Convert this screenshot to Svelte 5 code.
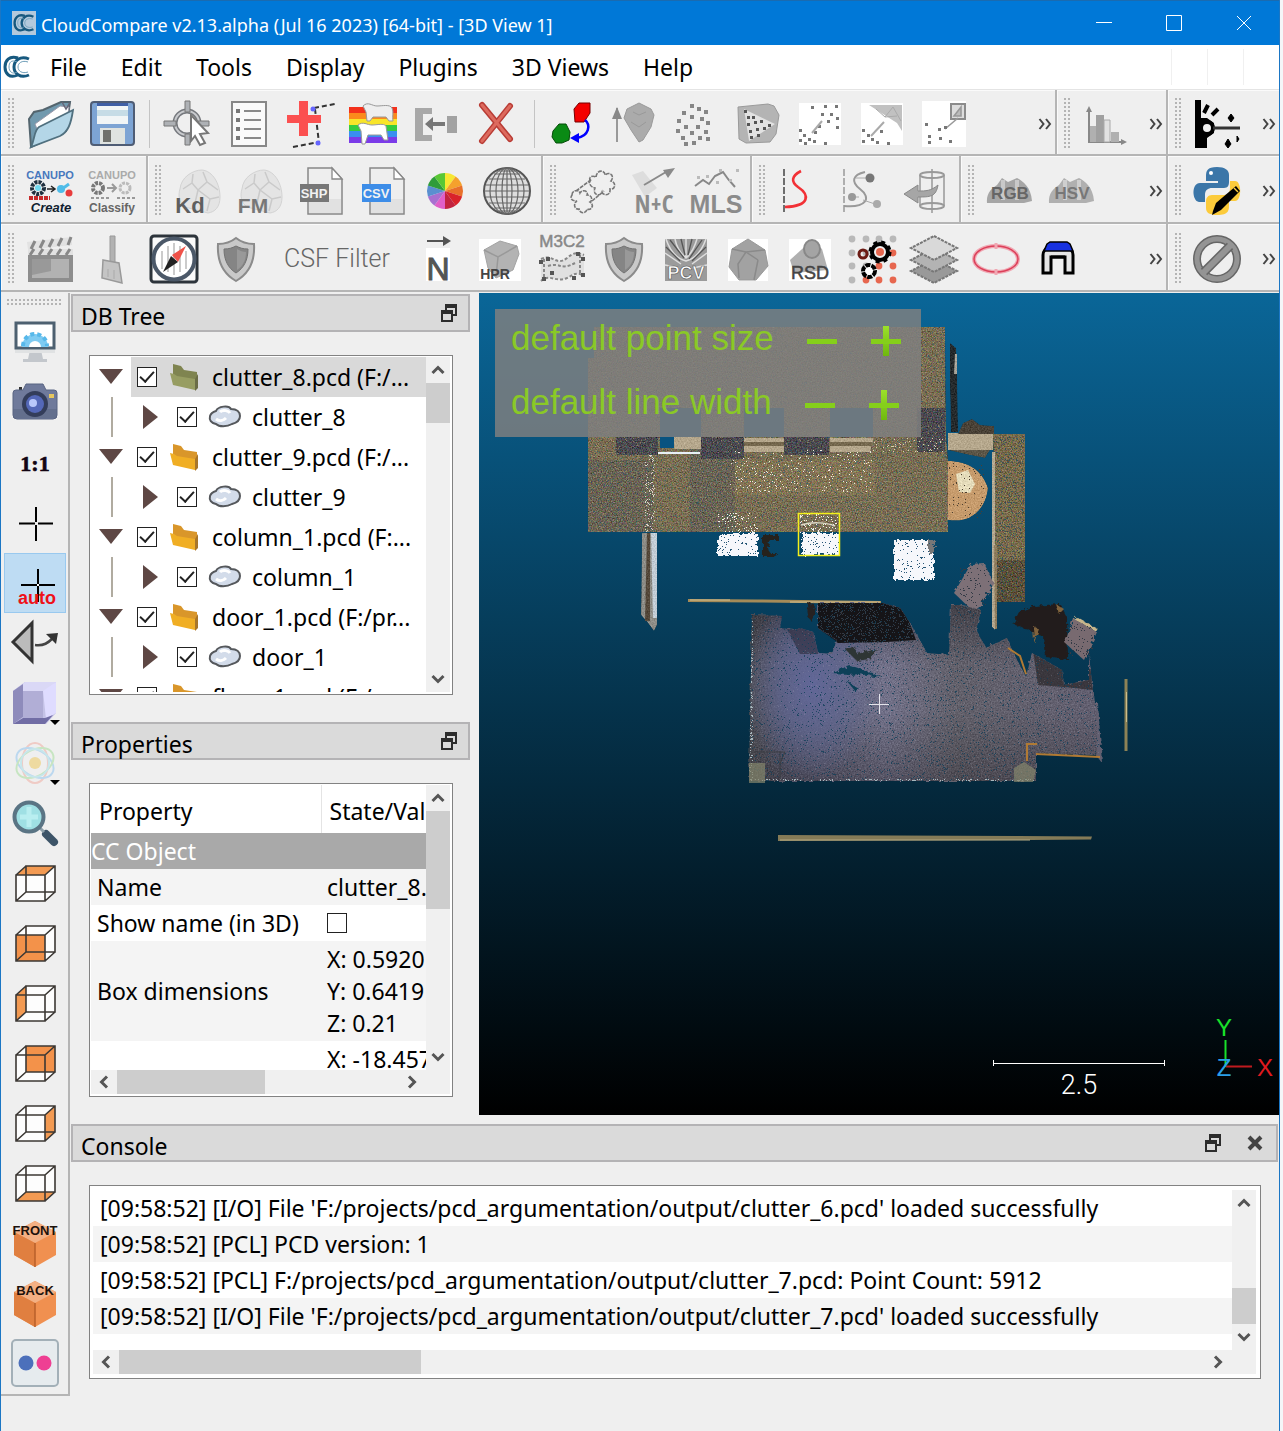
<script>
  const box = (faces) =>
    `<path d="M15 7h29v26l-10 9H5V16z" fill="#fdfdfd"/>${faces}<path d="M5 16h29v26H5zM15 7h29v26H15zM5 16L15 7M34 16l10-9M5 42l10-9M34 42l10-9" fill="none" stroke="#3c3834" stroke-width="1.6"/>`;
  const isoCube = (label) =>
    `<path d="M24 2l21 11v23L24 48 3 36V13z" fill="#f09050"/><path d="M24 2l21 11-21 11L3 13z" fill="#f3b084"/><path d="M3 13l21 11v24L3 36z" fill="#e07f40"/><path d="M24 24v24" stroke="#b95f2a" stroke-width="1.5"/><text x="24" y="16" font-size="13" font-weight="700" text-anchor="middle" fill="#1d120c">${label}</text>`;
  const shield =
    `<path d="M24 3c5 4 11 6 18 6 1 16-4 29-18 37C10 38 5 25 6 9c7 0 13-2 18-6z" fill="#c9c9c9" stroke="#8b8b8b" stroke-width="2"/><path d="M24 11c4 2 7 3 12 3 0 11-4 19-12 24-8-5-12-13-12-24 5 0 8-1 12-3z" fill="#858585" stroke="#737373"/><path d="M25 14c3 2 6 3 9 3 0 8-3 14-9 18z" fill="#999"/>`;
  const page = (color, label) =>
    `<path d="M11 1h24l10 11v35H11z" fill="#eee" stroke="#888" stroke-width="1.5"/><path d="M35 1v11h10z" fill="#fff" stroke="#888" stroke-width="1.3"/><path d="M12 32h32v14H12z" fill="#dcdcdc" opacity=".7"/><rect x="3" y="17" width="29" height="18" fill="${color}"/><text x="17" y="31" font-size="13" font-weight="700" text-anchor="middle" fill="#f2f2f2">${label}</text>`;
  const stone =
    `<path d="M7 22C8 10 20 3 29 3c11 1 18 14 18 27 0 10-5 15-12 16L12 40C6 36 5 28 7 22z" fill="#e4e4e4" stroke="#d3d3d3"/><path d="M10 22l9-6 6 7 9-8 11 8M19 16l1-9M34 15l-4-10M25 23l-3 13M25 23l12 9 9-2M37 32l-3 12" fill="none" stroke="#cacaca" stroke-width="1.5"/>`;
  const dotsAt = (pts, color, s = 3) =>
    pts.map(([x, y]) => `<rect x="${x}" y="${y}" width="${s}" height="${s}" fill="${color}"/>`).join('');

  const icons = {
    open: `<path d="M3 19l5-7 9-2 18-8 9 0-1 7-3 22L5 47z" fill="#7199ae" stroke="#54656e" stroke-width="2"/><path d="M9 24L34 6l9 1-2 14-28 13z" fill="#fff" stroke="#99a"/><path d="M5 47c4-8 3-17 8-20l34-17c-2 14-5 22-13 26z" fill="#b4d6e7" stroke="#50707f" stroke-width="1.8"/><path d="M36 2l4 7 4-6" fill="none" stroke="#667" stroke-width="1.5"/>`,
    save: `<rect x="3" y="2" width="43" height="43" rx="3" fill="#7da4d4" stroke="#4f5d75" stroke-width="2"/><rect x="9" y="3" width="31" height="21" fill="#f1f5f6"/><path d="M9 10h31v6H9z" fill="#c6dce6"/><path d="M9 3h31v3H9z" fill="#3f5fa5"/><rect x="12" y="28" width="25" height="16" fill="#dfe3e0"/><rect x="15" y="30" width="8" height="12" fill="#70716c"/>`,
    pick: `<g fill="none" stroke="#75787d"><circle cx="24" cy="23" r="12" stroke-width="5"/><circle cx="24" cy="23" r="12" stroke-width="2" stroke="#c9cbce"/></g><path d="M22 1h5v11h-5zM22 34h5v11h-5zM1 21h12v5H1zM35 21h11v5H35z" fill="#aeb1b5" stroke="#777"/><path d="M28 15l17 18-8 1 5 9-5 2-5-9-4 5z" fill="#fff" stroke="#777" stroke-width="2"/>`,
    list: `<rect x="7" y="2" width="34" height="44" fill="#fafafa" stroke="#888" stroke-width="2"/><path d="M19 11h17M19 20h17M19 29h17M19 38h17" stroke="#8a8a8a" stroke-width="2"/><path d="M11 9h4v4h-4zM11 18h4v4h-4zM11 27h4v4h-4zM11 36h4v4h-4z" fill="#777"/>`,
    trace: `<path d="M27 8l21-4M28 9l4 34M6 47l26-5" fill="none" stroke="#333" stroke-width="2" stroke-dasharray="5 3"/><path d="M12 1h9v14h13v8H21v13h-9V23H0v-8h12z" fill="#fb5050"/><circle cx="26" cy="9" r="2.5" fill="#66f"/><circle cx="31" cy="43" r="2.5" fill="#66f"/>`,
    rainbow: `<path d="M0 7h48v36H0z" fill="#7b3be8"/><path d="M0 7h48v30H0z" fill="#3a8ff0"/><path d="M0 7h48v24H0z" fill="#35cc40"/><path d="M0 7h48v18H0z" fill="#f8e52a"/><path d="M0 7h48v12H0z" fill="#fb8a1c"/><path d="M0 7h48v6H0z" fill="#f3311c"/><path d="M14 6c5-5 9 0 14 0s13-2 15 2 0 8 1 13h-4l-3-4H24l-3 4h-3l-1-9z" fill="#eee" stroke="#999"/><path d="M9 25c5-4 9 0 14 0s12-2 14 1l2 14h-4l-3-5H19l-3 9h-3l-1-13z" fill="#fff" stroke="#999"/>`,
    merge: `<path d="M4 8h17v6H12v21h9v6H4z" fill="#a8a8a8"/><path d="M36 16h10v17H36z" fill="#a2a2a2"/><path d="M14 24l8-7v5h12v4H22v5z" fill="#777"/>`,
    remove: `<path d="M9 5l28 34M37 6L9 41" stroke="#b93c35" stroke-width="6" stroke-linecap="round"/><path d="M9 5l28 34M37 6L9 41" stroke="#dd6a5e" stroke-width="3" stroke-linecap="round"/>`,
    align: `<path d="M26 9l5-6h11v10l-6 9h-9z" fill="#f40000" stroke="#700"/><path d="M5 31l6-7h7l4 8-1 8-7 3H8l-4-6z" fill="#0a8a14" stroke="#054c08"/><path d="M37 20c6 5 4 16-8 18" fill="none" stroke="#00f" stroke-width="2.5"/><path d="M22 38l9-5v10z" fill="#00f"/>`,
    normals: `<path d="M7 8v34" stroke="#999" stroke-width="2"/><path d="M2 19L7 7l5 12z" fill="#888"/><path d="M17 9l8-4 4-2 12 6 3 6-3 12-8 13-4 2-8-12-7-12z" fill="#ababab" stroke="#9a9a9a"/><path d="M23 12l6 3 7-3M21 22l8 5 7-5" stroke="#999" fill="none"/>`,
    points: dotsAt([[18, 4], [25, 7], [32, 10], [10, 11], [18, 15], [5, 19], [28, 17], [34, 21], [12, 25], [24, 25], [4, 29], [32, 30], [18, 31], [9, 36], [26, 36], [20, 41], [34, 37], [12, 42]], '#868686', 4),
    mesh: `<path d="M4 7l30-3 6 2 5 9-3 19-6 8-24 1-7-4z" fill="#b4b4b4" stroke="#9a9a9a"/><path d="M10 9l31 15-26 17z" fill="#e2e2e2"/>${dotsAt([[10, 10], [13, 16], [18, 16], [13, 23], [20, 21], [26, 20], [15, 30], [22, 28], [29, 27], [34, 24], [16, 36], [23, 34]], '#555')}`,
    c2c: `<rect x="3" y="3" width="42" height="42" fill="#fff"/>${dotsAt([[15, 6], [28, 5], [39, 5], [25, 13], [34, 13], [40, 17], [31, 20], [40, 26], [3, 29], [7, 34], [3, 39], [12, 38], [17, 40], [8, 42], [28, 42], [22, 25], [18, 31]], '#777')}<path d="M16 33l10-12" stroke="#aaa" stroke-width="2"/>`,
    c2m: `<rect x="3" y="3" width="42" height="42" fill="#fff"/><path d="M11 5h33v26l-5-8z" fill="#c1c1c1"/><path d="M18 9l9 8 8-10 8 14M27 17l12-1" fill="none" stroke="#aaa"/>${dotsAt([[4, 29], [9, 34], [4, 40], [13, 38], [18, 41], [29, 42], [22, 30]], '#777')}<path d="M13 36l13-14" stroke="#aaa" stroke-width="2"/>`,
    c2p: `<rect x="2" y="1" width="44" height="46" fill="#fff"/><rect x="31" y="4" width="14" height="15" fill="#ddd" stroke="#8b8b8b" stroke-width="2"/><path d="M34 16l7-9v9zM38 18L25 29" fill="#bbb" stroke="#999" stroke-width="1.6"/>${dotsAt([[5, 23], [18, 28], [8, 35], [8, 41], [19, 37], [29, 40], [24, 26]], '#777')}`,
    hist: `<path d="M7 10v32h34" fill="none" stroke="#888" stroke-width="2"/><path d="M4 12l3-6 3 6zM39 39l6 3-6 3z" fill="#888"/><path d="M8 26h6v16H8zM29 32h8v10h-8z" fill="#b0b0b0"/><path d="M14 15h8v27h-8z" fill="#a0a0a0"/><path d="M22 20h6v22h-6z" fill="#e1e1e1" stroke="#aaa"/>`,
    facets: `<path d="M2 0h6v18h6l7 5v10l-7 5v10H2z" fill="#000"/><circle cx="14" cy="28" r="6" fill="#efefef" stroke="#000" stroke-width="4"/><path d="M20 28h27" stroke="#333" stroke-width="3"/><path d="M11 13l4-8M19 15l6-6" stroke="#000" stroke-width="4"/><path d="M38 14l3 4-3 4-3-4zM35 39l3 5-3 4-3-4zM44 36l2 3-2 3z" fill="#000" stroke="#000"/>`,
    canupoCreate: `<text x="24" y="12" font-size="11" font-weight="700" text-anchor="middle" fill="#4777bd">CANUPO</text><circle cx="12" cy="21" r="6" fill="none" stroke="#20313f" stroke-width="4" stroke-dasharray="3 1"/><circle cx="12" cy="21" r="3" fill="#71d9ef"/><path d="M3 31h21" stroke="#c72a2a" stroke-width="4" stroke-dasharray="4 1"/><path d="M21 22h7M25 19l4 3-4 3" stroke="#222" fill="none" stroke-width="1.5"/><circle cx="35" cy="22" r="4" fill="#50bce8"/><path d="M36 22l7-5" stroke="#50bce8" stroke-width="3"/><circle cx="43" cy="26" r="3.5" fill="#e83c3c"/><text x="25" y="45" font-size="13" font-weight="700" font-style="italic" text-anchor="middle" fill="#101d30">Create</text>`,
    canupoClassify: `<text x="24" y="12" font-size="11" font-weight="700" text-anchor="middle" fill="#aaa">CANUPO</text><circle cx="10" cy="21" r="5" fill="none" stroke="#777" stroke-width="4" stroke-dasharray="3 1"/><path d="M3 31h18M29 31h18" stroke="#999" stroke-width="2" stroke-dasharray="3 2"/><path d="M19 21h9M24 17l4 4-4 4" stroke="#999" fill="none" stroke-width="2"/><circle cx="37" cy="21" r="5" fill="none" stroke="#bbb" stroke-width="3" stroke-dasharray="3 1"/><text x="24" y="45" font-size="12" font-weight="700" text-anchor="middle" fill="#666">Classify</text>`,
    kd: `${stone}<text x="17" y="46" font-size="22" font-weight="700" text-anchor="middle" fill="#5e5e5e">Kd</text>`,
    fm: `${stone}<text x="18" y="46" font-size="21" font-weight="700" text-anchor="middle" fill="#777">FM</text>`,
    shp: page('#777', 'SHP'),
    csv: page('#3d8de8', 'CSV'),
    wheel: ['#f7e733', '#f5a12c', '#e8702a', '#d9232a', '#c2233f', '#e05fc8', '#a86fd0', '#5a8fd0', '#2f9c3a', '#59c735']
      .map((c, i) => {
        const a = (i * 36 - 90) * Math.PI / 180, b = ((i + 1) * 36 - 90) * Math.PI / 180;
        return `<path d="M24 24L${24 + 18 * Math.cos(a)} ${24 + 18 * Math.sin(a)}A18 18 0 0 1 ${24 + 18 * Math.cos(b)} ${24 + 18 * Math.sin(b)}z" fill="${c}"/>`;
      }).join(''),
    globe: `<circle cx="24" cy="24" r="23" fill="#ddd" stroke="#555" stroke-width="2"/><g fill="none" stroke="#666" stroke-width="1.2"><ellipse cx="24" cy="24" rx="5" ry="23"/><ellipse cx="24" cy="24" rx="11" ry="23"/><ellipse cx="24" cy="24" rx="17" ry="23"/><path d="M24 1v46M1 24h46M3 18h42M3 30h42M6 12h36M6 36h36M11 7h26M11 41h26M16 4h16M16 44h16"/></g>`,
    clouds: `<path d="M22 14c-2-6 5-5 6-4 1-8 9-7 9-2 5-4 10 1 6 6 6 2 4 9-1 8 1 7-7 7-8 3-2 5-10 3-7-4-6-1-6-7-5-7zM4 28c0-5 7-6 8-2 2-4 9-2 7 2 5 0 6 5 3 7 5 3 1 9-3 7-1 5-7 5-8 0-5 1-6-6-2-8-6 0-7-3-5-6zM8 24l16-12M24 34l12-10" fill="none" stroke="#777" stroke-width="1.6" stroke-dasharray="4 1"/>`,
    nc: `<path d="M2 8l11-4 14 17-12 9z" fill="#ddd"/><path d="M14 18L36 5" stroke="#8a8a8a" stroke-width="2"/><path d="M33 3l12-2-7 10z" fill="#8a8a8a"/><text x="24" y="46" font-size="25" font-weight="700" font-family="'Open Sans Condensed','Liberation Sans Narrow','Liberation Sans',sans-serif" text-anchor="middle" fill="#8b8b8b">N+C</text>`,
    mls: `<path d="M3 19l8-6 6 4 6-8 8-4 5 7 7 8" fill="none" stroke="#888" stroke-width="2"/>${dotsAt([[5, 9], [14, 8], [24, 14], [37, 12], [44, 2], [27, 2]], '#bbb')}<text x="24" y="46" font-size="25" font-weight="700" font-family="'Liberation Sans Narrow','Liberation Sans',sans-serif" text-anchor="middle" fill="#8b8b8b">MLS</text>`,
    curve: `<path d="M7 2v44" stroke="#444" stroke-width="1.5" stroke-dasharray="7 2"/><path d="M24 4c-10 5-10 11-3 16 12 8 12 19-13 20" fill="none" stroke="#f23136" stroke-width="2.6"/>`,
    curveDots: `<path d="M5 2v44" stroke="#999" stroke-width="1.5" stroke-dasharray="7 2"/><path d="M26 5c-13 3-14 10-5 17 12 9 6 19-16 17" fill="none" stroke="#999" stroke-width="2"/><path d="M17 11h12M12 30h8M24 33l12 4" stroke="#aaa"/><circle cx="31" cy="11" r="4.5" fill="#777"/><circle cx="13" cy="30" r="4" fill="#999"/><circle cx="38" cy="37" r="4" fill="#aaa"/>`,
    unroll: `<ellipse cx="31" cy="8" rx="12" ry="3" fill="none" stroke="#999" stroke-width="2"/><ellipse cx="31" cy="39" rx="12" ry="3" fill="none" stroke="#999" stroke-width="2"/><path d="M19 8v31M43 8v31M31 2v44" stroke="#999" stroke-width="1.5"/><path d="M37 18c-2 12-8 12-20 12v6L3 27l14-9v6c8 0 13 0 20-6z" fill="#a6a6a6" stroke="#888"/>`,
    rgb: `<path d="M1 36c-1-10 5-15 10-18l5-7 6 4 9-4c6 3 14 9 15 23l-8 2H14z" fill="#a6a6a6"/><path d="M17 13v20M31 13v20" stroke="#c9c9c9" stroke-width="4"/><text x="24" y="32" font-size="17" font-weight="700" text-anchor="middle" fill="#666">RGB</text>`,
    hsv: `<path d="M1 36c-1-10 5-15 10-18l5-7 6 4 9-4c6 3 14 9 15 23l-8 2H14z" fill="#b0b0b0"/><path d="M17 13v20M31 13v20" stroke="#cfcfcf" stroke-width="4"/><text x="24" y="32" font-size="17" font-weight="700" text-anchor="middle" fill="#777">HSV</text>`,
    python: `<path d="M24 0c-10 0-11 4-11 9v5h12v2H7c-9 0-8 18-1 19h6v-7c0-5 3-7 7-7h12c4 0 5-3 5-6V8c0-5-4-8-12-8z" fill="#3b76a8"/><circle cx="18" cy="6" r="2" fill="#fff"/><path d="M24 48c12 0 12-5 12-10v-4h6c7 0 7-20 0-20h-5v7c0 5-3 7-7 7H19c-4 0-6 3-6 6v7c0 5 4 7 11 7z" fill="#fccb3b"/><path d="M20 44l3-8 20-17 4 5-19 19-9 5z" fill="#000"/><path d="M41 21l4 4" stroke="#fccb3b" stroke-width="1.5"/>`,
    film: `<path d="M2 19h45v28H2z" fill="#8d8d8d"/><path d="M6 24h37v19H6z" fill="#b2b2b2"/><path d="M6 24h19v12L6 40z" fill="#999"/><path d="M1 7l45-5v8L2 15z" fill="#e2e2e2"/><path d="M2 14h45v6H2z" fill="#e2e2e2"/><path d="M9 6l-4 8M18 5l-4 8M27 4l-4 8M36 3l-4 8M45 2l-3 8M8 14l-4 6M17 14l-4 6M26 14l-4 6M35 14l-4 6M44 14l-4 6" stroke="#888" stroke-width="3"/>`,
    broom: `<path d="M22 1h5v27h-5z" fill="#b2b2b2" stroke="#999"/><path d="M15 25l16 3 3 20-20-5z" fill="#c4c4c4" stroke="#999" stroke-width="1.5"/><path d="M20 34v8M26 35v9" stroke="#aaa"/>`,
    compass: `<rect x="1" y="1" width="46" height="46" rx="3" fill="#fafafa" stroke="#2d343b" stroke-width="3"/><circle cx="24" cy="24" r="20.500" fill="#fff" stroke="#4b5868" stroke-width="4"/><path d="M12 16v18M18 11v26M24 8v32M30 11v26M36 16v18" stroke="#bbb" stroke-width="1.5"/><path d="M36 11l-8 16-6-7z" fill="#ef5249"/><path d="M13 37l8-16 7 6z" fill="#222"/>`,
    shield,
    normal: `<rect x="12" y="13" width="24" height="33" fill="#fff"/><path d="M13 6h18" stroke="#555" stroke-width="2"/><path d="M29 1l8 5-8 5z" fill="#555"/><text x="24" y="45" font-size="32" text-anchor="middle" fill="#555" stroke="#555">N</text>`,
    hpr: `<rect x="3" y="4" width="42" height="42" fill="#fff"/><path d="M8 15l16-9 17 5 2 8-6 16-17 8-8-10z" fill="#b3b3b3" stroke="#a3a3a3"/><path d="M8 15l14 7 19-11M22 22l-2 20" fill="none" stroke="#999" stroke-width="1.5"/><text x="19" y="44" font-size="14" font-weight="700" text-anchor="middle" fill="#444">HPR</text>`,
    m3c2: `<text x="24" y="12" font-size="17" text-anchor="middle" fill="#888" stroke="#888" stroke-width=".5">M3C2</text><path d="M3 24c12-6 15 8 26-1 8-7 12-5 17-3v21c-8-5-11-1-17 2-12 5-17-5-26 3z" fill="#e0e0e0"/><path d="M3 24c12-6 15 8 26-1 8-7 12-5 17-3M3 46c9-8 14 2 26-3 6-3 9-7 17-2M6 24v20M42 20v20M10 31c13-4 12 5 27-3" fill="none" stroke="#888" stroke-width="2" stroke-dasharray="3 2"/>${dotsAt([[1, 25], [8, 22], [38, 17], [43, 22], [4, 42], [34, 41], [43, 38], [12, 36]], '#555', 4)}`,
    pcv: `<path d="M3 4h42v42H3z" fill="#9b9b9b"/><path d="M4 4c5 15 12 20 20 22 8-2 15-8 20-22M13 4c2 10 6 15 11 19 5-4 8-9 11-19M3 18l16 11M45 18L30 29M3 30l14 3M45 30l-14 3M24 4v18" fill="none" stroke="#dedede" stroke-width="1.5"/><path d="M8 5l14 18M40 5L27 24M4 12l14 14M44 12L30 26M19 4l4 16M30 4l-4 16" stroke="#555" stroke-width="1.3"/><text x="24" y="44" font-size="18" font-weight="700" text-anchor="middle" fill="#fff" stroke="#555" stroke-width=".6">PCV</text>`,
    poly: `<rect x="4" y="4" width="40" height="42" fill="#fff"/><path d="M24 4l17 11 3 16-12 14H15L5 32l3-18z" fill="#a2a2a2" stroke="#999"/><path d="M8 14l14 3 19-2M22 17l12 8M30 45l4-20M22 17l-8 12 1 14" fill="none" stroke="#8a8a8a" stroke-width="1.5"/>`,
    rsd: `<rect x="3" y="4" width="42" height="42" fill="#fff"/><path d="M15 15l11-10 10 9 6 21-34 3-4-13z" fill="#b0b0b0"/><ellipse cx="26" cy="14" rx="8" ry="9" fill="#a4a4a4" stroke="#888" stroke-width="2"/><text x="24" y="44" font-size="18" text-anchor="middle" fill="#444" stroke="#444" stroke-width=".5">RSD</text>`,
    gears: `${[4, 18, 31, 45].map((x, i) => [4, 18, 31, 45].map((y, j) => `<circle cx="${x}" cy="${y}" r="3.4" fill="${i > 0 && j > 0 && i + j > 3 || i === 3 && j > 0 ? '#e7674f' : '#b9b9b9'}"/>`).join('')).join('')}<circle cx="32" cy="17" r="8" fill="#efefef" stroke="#000" stroke-width="4"/><circle cx="32" cy="17" r="10" fill="none" stroke="#000" stroke-width="3" stroke-dasharray="4 4"/><circle cx="32" cy="17" r="4" fill="#e7674f"/><circle cx="15" cy="19" r="4" fill="none" stroke="#6b1b14" stroke-width="3"/><circle cx="21" cy="36" r="6" fill="#fff" stroke="#000" stroke-width="4" stroke-dasharray="5 1"/>`,
    layers: `<g stroke="#777" stroke-width="2" stroke-dasharray="3 1"><path d="M24 24l23 12-23 12L1 36z" fill="#999"/><path d="M24 13l23 12-23 12L1 25z" fill="#b3b3b3"/><path d="M24 1l23 12-23 12L1 13z" fill="#d9d9d9"/></g>`,
    ring: `<ellipse cx="24" cy="24" rx="22" ry="13" fill="none" stroke="#f0a8b3" stroke-width="4"/><ellipse cx="24" cy="24" rx="22" ry="13" fill="none" stroke="#dc405a" stroke-width="1.5"/><path d="M24 8v6M24 34v6" stroke="#f0a8b3" stroke-width="3"/>`,
    pants: `<path d="M9 38V20c0-4 3-7 7-9h16c4 2 7 5 7 9v18h-8V22H17v16z" fill="#e6e6e6" stroke="#000" stroke-width="3"/><path d="M13 9l3-2h17l3 2 3 7H10z" fill="#1731e0" stroke="#000" stroke-width="1.5"/><path d="M17 22h14" stroke="#000" stroke-width="3"/>`,
    forbid: `<circle cx="24" cy="24" r="20" fill="#eee" stroke="#666" stroke-width="8"/><circle cx="24" cy="24" r="20" fill="none" stroke="#949494" stroke-width="5"/><path d="M11 37L37 11" stroke="#666" stroke-width="9"/><path d="M10 38L38 10" stroke="#949494" stroke-width="6"/>`,

    screen: `<path d="M19 31h11l2 9h4v3H12v-3h5z" fill="#c3c7cc"/><path d="M4 28h40v6H4z" fill="#e0e2e3"/><rect x="5" y="4" width="38" height="25" fill="#fff" stroke="#4d6070" stroke-width="3"/><path d="M11 28a13 13 0 0 1 26 0z" fill="#7ecbf2"/><path d="M12 27a12 12 0 0 1 24 0" fill="none" stroke="#57b8ea" stroke-width="4" stroke-dasharray="4 3"/><path d="M18 28a6 6 0 0 1 12 0z" fill="#fff"/>`,
    camera: `<path d="M8 8h3v5H8z" fill="#333"/><path d="M15 5h17l3 6h8q3 0 3 3v22q0 4-4 4H6q-4 0-4-4V14q0-3 3-3h7z" fill="#6f7a9b" stroke="#596482"/><path d="M2 30h44v9H2z" fill="#58637f" opacity=".5"/><circle cx="24" cy="25" r="13" fill="#333d5a"/><circle cx="24" cy="25" r="9" fill="#5468b8"/><circle cx="22" cy="24" r="4" fill="#b9c8fb"/><path d="M38 15h5v4h-5z" fill="#e7c75f"/>`,
    one: `<text x="24" y="32" font-size="22" font-weight="700" font-family="'Liberation Serif',serif" text-anchor="middle" fill="#120412" stroke="#120412" stroke-width=".6">1:1</text>`,
    cross: `<path d="M25 8v15M25 26v16M8 24.500h16M27 24.500h15" stroke="#000" stroke-width="2"/>`,
    auto: `<path d="M27 10v33M10 26h34" stroke="#000" stroke-width="2"/><path d="M26 25h2v2h-2z" fill="#fff"/><text x="26" y="45" font-size="18" font-weight="700" text-anchor="middle" fill="#ee1118">auto</text>`,
    rotate: `<path d="M2 23L21 4v38z" fill="#bbb" stroke="#333" stroke-width="3"/><path d="M24 26c9 1 13-2 18-7" fill="none" stroke="#444" stroke-width="2.500"/><path d="M35 15l12-1-2 11z" fill="#333"/>`,
    cube: `<path d="M2 12L14 3h31v31L35 45H2z" fill="#c4c2e6"/><path d="M2 12L14 3h31L35 12z" fill="#dad8f6"/><path d="M2 12l10-7v33L2 45z" fill="#8e8bbb"/><path d="M12 12h20v28H12z" fill="#b1aed6"/><path d="M32 12L45 3v31L35 40z" fill="#dfdcff"/><path d="M12 39h22l8-3-8 9H2z" fill="#716da5"/>`,
    lights: `<g fill="none" stroke-width="2" opacity=".7"><ellipse cx="24" cy="24" rx="13" ry="20" stroke="#f0bcb4"/><ellipse cx="24" cy="24" rx="20" ry="13" stroke="#a7cff0" transform="rotate(30 24 24)"/><ellipse cx="24" cy="24" rx="20" ry="13" stroke="#b7e2b0" transform="rotate(-30 24 24)"/><circle cx="24" cy="24" r="14" stroke="#b7e3ea"/></g><circle cx="24" cy="24" r="6" fill="#eedaa0"/>`,
    zoom: `<path d="M35 35l8 8" stroke="#3d5468" stroke-width="8" stroke-linecap="round"/><path d="M28 28l5 5" stroke="#8ea0aa" stroke-width="3"/><circle cx="18" cy="18" r="14.500" fill="#9fe0e4" stroke="#5a7484" stroke-width="4"/><path d="M18 8v20M9 18h18" stroke="#b9eef0" stroke-width="5"/>`,
    top: box('<path d="M5 16L15 7h29l-10 9z" fill="#f39a52"/>'),
    front: box('<path d="M5 16h29v26H5z" fill="#f3924a"/>'),
    left: box('<path d="M5 16l10-9v26L5 42z" fill="#f39a52"/>'),
    back: box('<path d="M15 7h29v26H15z" fill="#f3924a"/>'),
    right: box('<path d="M34 16l10-9v26l-10 9z" fill="#f39a52"/>'),
    bottom: box('<path d="M5 42l10-9h29l-10 9z" fill="#f39a52"/>'),
    isoFront: isoCube('FRONT'),
    isoBack: isoCube('BACK'),
    stereo: `<rect x="1" y="1" width="46" height="46" rx="4" fill="#e6ebee" stroke="#a3b0b8" stroke-width="2"/><circle cx="15" cy="24" r="7.500" fill="#4c70bb"/><circle cx="33" cy="24" r="7.500" fill="#ee3f93"/>`
  };

  const rows = [
    [
      { size: 'grow', more: true, items: ['open', 'save', '|', 'pick', 'list', 'trace', 'rainbow', 'merge', 'remove', '|', 'align', 'normals', 'points', 'mesh', 'c2c', 'c2m', 'c2p'] },
      { size: 'short', more: true, items: ['hist'] },
      { size: 'short', more: true, items: ['facets'] }
    ],
    [
      { size: '', items: ['canupoCreate', 'canupoClassify'] },
      { size: '', items: ['kd', 'fm', 'shp', 'csv', 'wheel', 'globe'] },
      { size: '', items: ['clouds', 'nc', 'mls'] },
      { size: '', items: ['curve', 'curveDots', 'unroll'] },
      { size: 'grow', more: true, items: ['rgb', 'hsv'] },
      { size: 'short', more: true, items: ['python'] }
    ],
    [
      { size: 'grow', more: true, items: ['film', 'broom', 'compass', 'shield', 'CSF Filter', 'normal', 'hpr', 'm3c2', 'shield', 'pcv', 'poly', 'rsd', 'gears', 'layers', 'ring', 'pants'] },
      { size: 'short', more: true, items: ['forbid'] }
    ]
  ];
  const side = ['screen', 'camera', 'one', 'cross', 'auto', 'rotate', 'cube', 'lights', 'zoom', 'top', 'front', 'left', 'back', 'right', 'bottom', 'isoFront', 'isoBack', 'stereo'];
  const menus = ['File', 'Edit', 'Tools', 'Display', 'Plugins', '3D Views', 'Help'];
  const tree = [
    { name: 'clutter_8.pcd (F:/...', child: 'clutter_8', selected: true },
    { name: 'clutter_9.pcd (F:/...', child: 'clutter_9' },
    { name: 'column_1.pcd (F:...', child: 'column_1' },
    { name: 'door_1.pcd (F:/pr...', child: 'door_1' },
    { name: 'floor_1.pcd (F:/p...' }
  ];
  const logs = [
    "[09:58:52] [I/O] File 'F:/projects/pcd_argumentation/output/clutter_6.pcd' loaded successfully",
    '[09:58:52] [PCL] PCD version: 1',
    '[09:58:52] [PCL] F:/projects/pcd_argumentation/output/clutter_7.pcd: Point Count: 5912',
    "[09:58:52] [I/O] File 'F:/projects/pcd_argumentation/output/clutter_7.pcd' loaded successfully"
  ];

  // Scatter of single-pixel points, repeatable for a given seed.
  function scatter(seed, n, x, y, w, h) {
    let s = seed, d = '';
    const next = () => ((s = (s * 1664525 + 1013904223) >>> 0) / 4294967296);
    for (let i = 0; i < n; i++) d += `M${x + Math.floor(next() * w)} ${y + Math.floor(next() * h)}h1v1h-1z`;
    return d;
  }
  const ceiling = 'M594 327H945L946 435L948 460V532H588V358H594z';
  const floor = 'M752 615l30 1-2 12 15 2 5-2 13 4 4 16 1 5 14 1 5-14-19-12V603h64l18 5 10 15 17 30 22 2 2-50h8l22 5-5 20 10 18 21-10 5 12 14 27 6-24 30 17 2 15 25-5v-25l3 28 2 20h4l4 60-6-8-60-2v28H749z';
</script>

{#snippet icon(name)}
  <svg class="icon" viewBox="0 0 48 48" aria-hidden="true">{@html icons[name]}</svg>
{/snippet}

{#snippet chevron(dir)}
  <button class="chev {dir}" aria-label="Scroll {dir}">
    <svg viewBox="0 0 14 14" aria-hidden="true"><path d="M1.500 10L7 4.500L12.500 10" /></svg>
  </button>
{/snippet}

{#snippet floatButton()}
  <button class="dock-btn" aria-label="Float">
    <svg viewBox="0 0 18 18" aria-hidden="true"><path d="M6 6V2h10v9h-4M2 8h10v9H2z" /><path d="M5 2h12M1 8h12" class="thick" /></svg>
  </button>
{/snippet}

{#snippet logo()}
  <svg class="logo" viewBox="0 0 28 28" aria-hidden="true">
    <path d="M15 5C6 2 2 8 2 14s4 12 13 8M26 6C17 2 11 8 11 14s6 12 15 8" />
    <path d="M14 9c-6-3-8 1-8 5s3 8 8 5M25 9c-6-2-10 1-10 5s4 7 10 5" class="inner" />
  </svg>
{/snippet}

<div class="desk">
  <div class="window">
    <header class="title">
      <span class="title-logo">{@render logo()}</span>
      <h1>CloudCompare v2.13.alpha (Jul 16 2023) [64-bit] - [3D View 1]</h1>
      <button aria-label="Minimize"><svg viewBox="0 0 16 16"><path d="M0 7.500h16" /></svg></button>
      <button aria-label="Maximize"><svg viewBox="0 0 16 16"><path d="M.5.5h15v15H.5z" /></svg></button>
      <button aria-label="Close"><svg viewBox="0 0 16 16"><path d="M1 1l14 14M15 1L1 15" /></svg></button>
    </header>

    <nav class="menu">
      {@render logo()}
      {#each menus as m}<button>{m}</button>{/each}
      <div class="ticks"><i></i><i></i><i></i></div>
    </nav>

    {#each rows as row}
      <div class="tool-row">
        {#each row as bar}
          <div class="toolbar {bar.size}" role="toolbar">
            <span class="grip"></span>
            {#each bar.items as item}
              {#if item === '|'}
                <span class="sep"></span>
              {:else if icons[item]}
                <button class="tool" aria-label={item}>{@render icon(item)}</button>
              {:else}
                <button class="tool wide">{item}</button>
              {/if}
            {/each}
            {#if bar.more}
              <button class="more" aria-label="More">
                <svg viewBox="0 0 14 12" aria-hidden="true"><path d="M1.500 1l4 5-4 5M8 1l4 5-4 5" /></svg>
              </button>
            {/if}
          </div>
        {/each}
      </div>
    {/each}

    <main>
      <div class="side" role="toolbar">
        <span class="side-grip"></span>
        {#each side as item}
          <button class:active={item === 'auto'} aria-label={item}>
            {@render icon(item)}
            {#if item === 'cube' || item === 'lights'}<span class="drop"></span>{/if}
          </button>
        {/each}
      </div>

      <div class="content">
        <div class="upper">
          <div class="docks">
            <section class="dock tree-dock">
              <div class="dock-head"><h2>DB Tree</h2>{@render floatButton()}</div>
              <div class="frame">
                <ul class="tree">
                  {#each tree as node}
                    <li>
                      <div class="node">
                        <svg class="arrow" viewBox="0 0 24 24" aria-hidden="true"><path d="M0 4h24L12 19z" /></svg>
                        <label class:selected={node.selected}>
                          <input type="checkbox" checked />
                          <svg class="folder" class:olive={node.selected} viewBox="0 0 30 28" aria-hidden="true">
                            <path class="f1" d="M4 1l8 2 3 4 13 2v13L4 17z" /><path class="f2" d="M1 10l4 1 3 2 18 3v11L4 22z" /><path class="f3" d="M26 16l3-5v14l-3 3z" />
                          </svg>
                          <span>{node.name}</span>
                        </label>
                      </div>
                      {#if node.child}
                        <div class="node child">
                          <svg class="arrow" viewBox="0 0 24 24" aria-hidden="true"><path d="M5 0v24l15-12z" /></svg>
                          <label>
                            <input type="checkbox" checked />
                            <svg class="cloud" viewBox="0 0 34 26" aria-hidden="true">
                              <path d="M8 7c2-5 13-6 15-2 6 0 9 3 9 7 0 5-4 7-8 8-5 3-13 3-16 0-5-1-7-4-6-8 1-3 3-4 6-5z" /><path class="puff" d="M12 8c3-3 9-1 10 1M8 15c4 3 8 1 10-1" />
                            </svg>
                            <span>{node.child}</span>
                          </label>
                        </div>
                      {/if}
                    </li>
                  {/each}
                </ul>
                <div class="vbar">{@render chevron('up')}<span class="thumb t-tree"></span>{@render chevron('down')}</div>
              </div>
            </section>

            <section class="dock prop-dock">
              <div class="dock-head"><h2>Properties</h2>{@render floatButton()}</div>
              <div class="frame">
                <div class="table-area">
                  <table>
                    <thead><tr><th>Property</th><th>State/Val</th></tr></thead>
                    <tbody>
                      <tr class="group"><td colspan="2">CC Object</td></tr>
                      <tr class="alt"><td>Name</td><td>clutter_8.</td></tr>
                      <tr><td><label for="show-name">Show name (in 3D)</label></td><td><input id="show-name" type="checkbox" /></td></tr>
                      <tr class="alt"><td>Box dimensions</td><td>X: 0.5920<br />Y: 0.6419<br />Z: 0.21</td></tr>
                      <tr><td class="blank"></td><td>X: -18.457</td></tr>
                    </tbody>
                  </table>
                </div>
                <div class="vbar">{@render chevron('up')}<span class="thumb t-prop"></span>{@render chevron('down')}</div>
                <div class="hbar">{@render chevron('left')}<span class="thumb w-prop"></span>{@render chevron('right')}</div>
              </div>
            </section>
          </div>

          <section class="view" aria-label="3D View 1">
            <svg class="scene" viewBox="479 293 800 822" preserveAspectRatio="xMinYMin meet" aria-hidden="true">
              <defs>
                <filter id="grain" x="0" y="0" width="100%" height="100%" color-interpolation-filters="sRGB">
                  <feTurbulence type="fractalNoise" baseFrequency="0.8" numOctaves="2" seed="4" />
                  <feColorMatrix values=".7 .2 .1 0 0 .2 .7 .1 0 0 .2 .2 .6 0 0 0 0 0 0 1" result="n" />
                  <feComposite in="SourceGraphic" in2="n" operator="arithmetic" k2="1" k3="0.75" k4="-0.36" result="m" />
                  <feComposite in="m" in2="SourceGraphic" operator="in" />
                </filter>
                <filter id="fine" x="0" y="0" width="100%" height="100%" color-interpolation-filters="sRGB">
                  <feTurbulence type="fractalNoise" baseFrequency="0.7" numOctaves="2" seed="9" />
                  <feColorMatrix values="1 0 0 0 0 1 0 0 0 0 1 0 0 0 0 0 0 0 0 1" result="n" />
                  <feComposite in="SourceGraphic" in2="n" operator="arithmetic" k2="1" k3="0.25" k4="-0.125" result="m" />
                  <feComposite in="m" in2="SourceGraphic" operator="in" />
                </filter>
                <filter id="rough" x="-5%" y="-5%" width="110%" height="110%">
                  <feTurbulence type="fractalNoise" baseFrequency="0.25" numOctaves="2" seed="3" />
                  <feDisplacementMap in="SourceGraphic" scale="6" />
                </filter>
                <radialGradient id="violet" gradientUnits="userSpaceOnUse" cx="812" cy="685" r="85" gradientTransform="translate(812 685) scale(.8 1.15) translate(-812 -685)">
                  <stop offset="0" stop-color="#62689c" stop-opacity=".9" /><stop offset=".5" stop-color="#606793" stop-opacity=".65" /><stop offset="1" stop-color="#606793" stop-opacity="0" />
                </radialGradient>
                <linearGradient id="ground" x1="0" x2="1"><stop offset="0" stop-color="#4d4d52" /><stop offset=".12" stop-color="#56566a" /><stop offset=".4" stop-color="#727189" /><stop offset=".6" stop-color="#62606a" /><stop offset="1" stop-color="#625f70" /></linearGradient>
                <linearGradient id="shade" x1="0" x2="0" y1="0" y2="1"><stop offset="0" stop-color="#1c1b20" stop-opacity=".5" /><stop offset=".35" stop-color="#1c1b20" stop-opacity="0" /><stop offset=".6" stop-color="#333" stop-opacity="0" /><stop offset="1" stop-color="#2e2a30" stop-opacity=".45" /></linearGradient>
                <clipPath id="ceilClip"><path d={ceiling} /></clipPath>
                <clipPath id="floorClip"><path d={floor} /></clipPath>
              </defs>

              <g filter="url(#grain)">
                <path d="M993 434h32v168h-29z" fill="#746748" />
                <path d={ceiling} fill="#75694f" />
                <path d="M588 460h65v72h-65zM690 440h45v92h-45z" fill="#605b51" opacity=".7" />
                <path d="M735 460h140v35H735z" fill="#857553" opacity=".6" />
                <path d="M616 437h42v18h-42zM701 437h43v22h-43zM784 437h45v18h-45zM917 408h28v44h-28z" fill="#48454a" />
                <path d="M994 560h31v42h-29z" fill="#4f432f" opacity=".7" />
              </g>
              <g clip-path="url(#ceilClip)">
                <path d={scatter(7, 2600, 588, 327, 360, 206)} fill="#1c5674" opacity=".6" />
                <path d={scatter(17, 1500, 588, 327, 360, 206)} fill="#a39168" opacity=".7" />
                <path d={scatter(27, 900, 588, 440, 360, 92)} fill="#4d7d61" opacity=".7" />
                <path d={scatter(37, 230, 729, 450, 145, 42)} fill="#efe9d9" />
                <path d={scatter(38, 100, 645, 455, 10, 80)} fill="#d8d4c8" />
                <path d={scatter(40, 70, 850, 438, 95, 14)} fill="#d9cfae" />
              </g>
              <path d={scatter(47, 500, 994, 436, 30, 165)} fill="#1c4a62" opacity=".7" />
              <path d="M660 408h41v29h-41zM744 408h40v29h-40zM830 408h43v29h-43zM660 437h14v11h-14z" fill="#085380" />
              <g filter="url(#fine)">
                <path d="M674 437h27v12h-27zM744 438h40v14h-40zM830 438h44l-4 14h-40zM948 433h45v17h-45z" fill="#b5a78c" />
                <path d="M744 442h40v4h-40zM830 442h42v4h-42z" fill="#75684e" />
                <path d="M642 533h15v92l-3 6-6-8-7-8z" fill="#8e8d87" />
                <path d="M647 533h3v88h-5z" fill="#54483a" /><path d="M651 533h6v85h-4z" fill="#c2ccd5" />
                <path d="M948 461c20 0 34 9 40 27-2 20-16 36-40 32z" fill="#c69b6c" />
                <path d="M956 474l12-4 7 14-5 9-11-1z" fill="#e5dcbb" />
                <path d="M950 343l6 5 1 28 1 56h-7l-1-52z" fill="#252a2c" /><path d="M955 354h2v20h-3z" fill="#aaa59a" />
                <path d="M958 434l5-11 9-4 8 6 14 1v8z" fill="#4a4237" /><path d="M948 450h42l-5 8-20-4z" fill="#5b5547" />
                <path d="M992 452h3v178l-3-3z" fill="#b5a88f" /><path d="M994 545h3v84h-2z" fill="#8d7b5c" />
              </g>
              <path d={scatter(49, 60, 949, 463, 36, 56)} fill="#4b3f30" />
              <path d="M658 453h42" stroke="#e7f0f6" stroke-width="2" />
              <g filter="url(#rough)">
                <path d="M718 534h40v22h-40zM802 533h37v22h-37zM894 540h40v40h-40z" fill="#f6f7fb" />
                <path d="M763 535h16v5h-9l-3 8 4 6h8l-6 3h-10z" fill="#25241f" />
                <path d="M928 540h7v13h-7z" fill="#777" />
                <path d="M954 593l17-29 13-1 10 21-19 29z" fill="#7d7077" />
              </g>
              <path d={scatter(57, 70, 718, 513, 40, 20) + scatter(59, 70, 800, 514, 38, 19)} fill="#f3f1e8" />
              <path d={scatter(67, 55, 718, 534, 40, 22) + scatter(69, 55, 801, 533, 37, 22) + scatter(71, 90, 894, 540, 40, 40)} fill="#285777" />
              <path d="M801 525c10-3 24-3 34 1" fill="none" stroke="#ded9c9" stroke-width="1.500" />
              <path d="M798.500 513.500h41v42h-41z" fill="none" stroke="#f4f01b" stroke-width="1.500" />
              <path d="M688 600.500l70 .5 123 1.500" fill="none" stroke="#a58b58" stroke-width="3" /><path d="M690 600h40M790 602h90" stroke="#d2c192" />

              <g filter="url(#rough)">
                <path d="M818 603h64l18 5 10 15 8 18H836l-18-13z" fill="#151417" />
                <path d="M807 603l8 1-2 19-5-6z" fill="#262220" />
                <path d="M1013 624l6-12 14-6 27-2 7 13 1 43-22-3-2-20-12-5z" fill="#211d1b" />
                <path d="M1033 626l6 3-5 14zM1056 604l8 5-5 5z" fill="#80633d" />
                <path d={floor} fill="url(#ground)" />
              </g>
              <g clip-path="url(#floorClip)">
                <g filter="url(#fine)">
                  <path d="M752 590h345v195H745z" fill="url(#ground)" />
                  <path d="M752 600h345v185H745z" fill="url(#shade)" />
                </g>
                <path d="M720 590h250v190H720z" fill="url(#violet)" />
                <path d="M818 600h68l18 8 12 32-30 2-48 1-22-14z" fill="#151417" />
                <path d="M780 616l38 18v20h-18z" fill="#2b2a3a" opacity=".6" />
                <path d="M1033 650l60 20v20l-30-3-25-2z" fill="#252224" opacity=".65" />
                <path d={scatter(77, 3200, 749, 603, 355, 182)} fill="#12405a" opacity=".8" />
                <path d={scatter(79, 1400, 749, 603, 355, 182)} fill="#a09fb4" opacity=".25" />
                <path d={scatter(81, 500, 818, 603, 95, 40)} fill="#2d3b48" />
                <path d={scatter(83, 160, 749, 615, 4, 168) + scatter(85, 260, 749, 779, 290, 4)} fill="#a7b7bd" />
              </g>
              <g filter="url(#rough)">
                <path d="M832 674l17-9 12 4 20 8-22-3-9 1zM846 680l14 10-4 2z" fill="#0a4159" />
                <path d="M846 650l8-4 3 8 20-5-8 10-12 2z" fill="#2d3536" />
                <path d="M1073 618l24 14-13 28-19-17z" fill="#786a6f" /><path d="M1075 618l22 12" stroke="#c8b68b" stroke-width="3" />
              </g>
              <path d={scatter(91, 70, 960, 568, 30, 38) + scatter(93, 60, 1068, 624, 25, 32)} fill="#333a45" />
              <path d="M749 763h16v20h-16zM1014 768l10-6 12 8-3 12h-19z" fill="#84866c" opacity=".7" />
              <path d="M1027 761v-17h10M1036 754l64 3M1008 648l12 8 6 18" fill="none" stroke="#b07a34" stroke-width="2" />
              <path d="M750 752h35l-5 12M780 752v28" fill="none" stroke="#3a3d42" />
              <path d="M1126 679v72" stroke="#8d8256" stroke-width="3" /><path d="M1126.500 692v30" stroke="#cbbd8c" />
              <path d="M778 835l240 1 74 .5-1 3-60 .5-253 1z" fill="#857b57" /><path d="M780 840h250" stroke="#b5ab84" />
              <path d="M879.500 694v20M869 704.500h20" stroke="#e3e3ea" />

              <path d="M993.500 1060v6M1164.500 1060v6M993 1063.500h172" stroke="#fff" fill="none" />
              <text x="1079" y="1094" class="scale">2.5</text>
              <path d="M1225.500 1040v27" stroke="#19e02a" stroke-width="2" /><path d="M1226 1066.500h26" stroke="#c01a1f" stroke-width="2" />
              <text x="1224" y="1036" class="axis y">Y</text><text x="1265" y="1076" class="axis x">X</text><text x="1224" y="1076" class="axis z">Z</text>
            </svg>
            <div class="overlay">
              {#each ['default point size', 'default line width'] as label}
                <div class="control">
                  <span>{label}</span>
                  <button class="minus" aria-label="Decrease {label}"></button>
                  <button class="minus plus" aria-label="Increase {label}"></button>
                </div>
              {/each}
            </div>
          </section>
        </div>

        <section class="dock console">
          <div class="dock-head">
            <h2>Console</h2>
            {@render floatButton()}
            <button class="dock-btn" aria-label="Close"><svg viewBox="0 0 18 18" aria-hidden="true"><path d="M3 3l12 12M15 3L3 15" class="x" /></svg></button>
          </div>
          <div class="frame">
            <ol class="log">{#each logs as line}<li>{line}</li>{/each}</ol>
            <div class="vbar">{@render chevron('up')}<span class="thumb t-log"></span>{@render chevron('down')}</div>
            <div class="hbar">{@render chevron('left')}<span class="thumb w-log"></span>{@render chevron('right')}</div>
          </div>
        </section>
      </div>
    </main>
  </div>
</div>

<style>
  :global(body) { background: #f4f6f8; }
  * { box-sizing: border-box; }
  button { border: 0; background: none; padding: 0; margin: 0; font: inherit; color: inherit; display: grid; place-items: center; }
  h1, h2, ul, ol { margin: 0; padding: 0; font-weight: 400; list-style: none; }
  .desk { font: 23px/32px 'Noto Sans', 'Noto Sans CJK KR', sans-serif; color: #000; padding-right: 3px; }
  .window { height: 100vh; display: flex; flex-direction: column; background: #efefef; border: solid #1b76c4; border-width: 0 1px; }

  .title { flex: none; height: 45px; background: #0078d7; border-top: 1px solid #1a6bb0; color: #fff; display: flex; align-items: center; padding-left: 11px; }
  .title h1 { flex: 1; font-size: 18px; line-height: 24px; white-space: nowrap; padding-top: 3px; margin-left: 5px; }
  .title button { width: 70px; height: 44px; }
  .title button svg { width: 16px; height: 16px; fill: none; stroke: #fff; stroke-width: 1; }
  .title-logo { background: #b3c9dc; width: 24px; height: 24px; display: grid; place-items: center; }
  .title-logo .logo { width: 22px; height: 22px; }
  .logo { width: 28px; height: 28px; fill: none; stroke: #17597f; stroke-width: 3; }
  .logo .inner { stroke: #6d9db8; stroke-width: 1; }

  .menu { flex: none; height: 45px; background: #fff; display: flex; align-items: center; padding-left: 2px; border-bottom: 1px solid #e4e4e4; }
  .menu button { padding: 0 17px; height: 44px; }
  .menu .logo { margin-right: 2px; }
  .ticks { margin-left: auto; display: flex; gap: 35px; padding-right: 35px; }
  .ticks i { width: 1px; height: 36px; background: #f0f0f0; }

  .tool-row { flex: none; display: flex; height: 68px; }
  .tool-row:first-of-type { height: 66px; }
  .toolbar { display: flex; align-items: center; padding: 3px 3px 0 0; border: solid #b5b5b5; border-width: 0 2px 2px 0; box-shadow: inset 1px 1px #fafafa; }
  .toolbar.grow { flex: 1; padding-right: 0; }
  .toolbar.short { flex: none; width: 111px; padding-right: 0; }
  .toolbar:last-child { border-right-width: 0; }
  .grip { width: 6px; height: 52px; margin: 0 5px 0 7px; background: radial-gradient(circle at 1px 1px, #b4b4b4 1px, transparent 1px) 0 0 / 4px 4px; }
  .tool { width: 62px; height: 62px; flex: none; }
  .tool.wide { width: 140px; font-family: Roboto, 'Noto Sans', sans-serif; font-weight: 300; font-size: 25px; color: #666; }
  .icon { width: 48px; height: 48px; display: block; font-family: 'Liberation Sans', Arial, sans-serif; overflow: visible; }
  .sep { width: 1px; height: 48px; background: #c4c4c4; margin: 0 6px; }
  .more { width: 20px; height: 40px; margin-left: auto; }
  .more svg { width: 14px; height: 12px; fill: none; stroke: #444; stroke-width: 2; }

  main { flex: 1; min-height: 0; display: flex; align-items: stretch; }
  .side { width: 69px; flex: none; align-self: flex-start; border: solid #b5b5b5; border-width: 0 2px 2px 0; padding: 6px 0 1px; margin-top: 1px; display: flex; flex-direction: column; align-items: center; }
  .side-grip { width: 56px; height: 6px; margin-bottom: 8px; background: radial-gradient(circle at 1px 1px, #b4b4b4 1px, transparent 1px) 0 0 / 4px 4px; }
  .side button { width: 62px; height: 60px; position: relative; }
  .side button.active { background: #bedcf3; border: 1px solid #99c9ef; }
  .drop { position: absolute; right: 6px; bottom: 8px; border: solid transparent; border-width: 5px 5px 0; border-top-color: #000; }

  .content { flex: 1; min-width: 0; display: flex; flex-direction: column; padding: 1px 0 52px 0; }
  .upper { flex: 1; min-height: 0; display: flex; }
  .docks { width: 400px; flex: none; display: flex; flex-direction: column; padding-top: 1px; margin-right: 9px; }
  .dock { display: flex; flex-direction: column; min-height: 0; padding-left: 1px; }
  .tree-dock { flex: 401 1 0; }
  .prop-dock { flex: 375 1 0; padding-bottom: 18px; margin-top: 27px; }
  .dock-head { flex: none; height: 38px; display: flex; align-items: center; background: #dadada; border: 2px solid #b4b3b5; padding: 0 9px 0 8px; }
  .dock-head h2 { flex: 1; font-size: 23px; padding-top: 5px; }
  .dock-btn { width: 20px; height: 20px; }
  .dock-btn + .dock-btn { margin-left: 22px; }
  .dock-btn svg { width: 18px; height: 18px; fill: none; stroke: #2c2c2c; stroke-width: 2; }
  .dock-btn .thick { stroke-width: 4; }
  .dock-btn .x { stroke-width: 4; stroke: #444; }
  .frame { flex: 1; min-height: 0; margin: 23px 17px 0 18px; border: 1px solid #828282; background: #fff; padding: 1px 2px 2px 1px; display: grid; grid-template: minmax(0, 1fr) auto / minmax(0, 1fr) 24px; overflow: hidden; }

  .vbar, .hbar { background: #f0f0f0; display: flex; align-items: center; }
  .vbar { flex-direction: column; }
  .hbar { grid-column: 1 / 3; height: 24px; padding-right: 25px; }
  .chev { width: 24px; height: 26px; flex: none; }
  .chev:last-child { margin: auto 0 0; }
  .hbar .chev { width: 26px; height: 24px; }
  .hbar .chev:last-child { margin: 0 0 0 auto; }
  .chev svg { width: 14px; height: 14px; fill: none; stroke: #555; stroke-width: 3; }
  .down svg { transform: rotate(180deg); }
  .left svg { transform: rotate(-90deg); }
  .right svg { transform: rotate(90deg); }
  .thumb { background: #cdcdcd; }
  .vbar .thumb { width: 24px; }
  .hbar .thumb { height: 24px; }
  .t-tree { height: 40px; }
  .t-prop { height: 98px; }
  .t-log { height: 36px; margin-top: auto; }
  .t-log + .chev { margin: 0; }
  .w-prop { width: 148px; }
  .w-log { width: 302px; }

  .tree { overflow: hidden; }
  .node { height: 40px; display: flex; align-items: center; padding-left: 8px; }
  .arrow { width: 24px; height: 24px; flex: none; fill: #5e4744; margin-right: 8px; }
  .node label { flex: 1; min-width: 0; height: 40px; display: flex; align-items: center; padding-left: 6px; white-space: nowrap; overflow: hidden; }
  .node label.selected { background: #d9d9d9; }
  .child { padding-left: 20px; }
  .child::before { content: ''; width: 2px; height: 40px; background: #b0aba0; margin-right: 25px; }
  .child .arrow { margin-right: 7px; }
  .child label { padding-left: 8px; }
  input { appearance: none; width: 20px; height: 20px; flex: none; margin: 0; border: 1px solid #222; background: #fff; display: grid; place-items: center; }
  input:checked::after { content: ''; width: 6px; height: 12px; border: solid #222; border-width: 0 2px 2px 0; transform: rotate(42deg); margin-bottom: 4px; }
  .folder { width: 30px; height: 28px; margin: 0 13px 0 12px; flex: none; }
  .f1 { fill: #d9962a; }
  .f2 { fill: #f0ae24; }
  .f3 { fill: #a8762a; }
  .olive .f1 { fill: #7f8450; }
  .olive .f2 { fill: #979d62; }
  .olive .f3 { fill: #6b6d47; }
  .cloud { width: 34px; height: 26px; margin: 0 10px 0 11px; flex: none; fill: #d3dcea; stroke: #55585c; stroke-width: 2; }
  .cloud .puff { fill: none; stroke: #fff; stroke-width: 3; }

  .table-area { overflow: hidden; }
  table { border-collapse: collapse; table-layout: fixed; width: 460px; }
  th, td { font-weight: 400; text-align: left; padding: 2px 6px; white-space: nowrap; }
  th { height: 48px; padding: 4px 8px 0; }
  th:first-child { width: 230px; border-right: 1px solid #e4e4e4; }
  .alt { background: #f4f4f4; }
  .group { background: #a9a9a9; color: #fff; }
  .group td { padding-left: 0; }
  td input { margin: 0; }

  .view { flex: 1; min-width: 0; position: relative; background: linear-gradient(#0a6698, #000); overflow: hidden; }
  .scene { display: block; width: 100%; height: 100%; }
  .scale { fill: #fff; font: 300 27px Roboto, sans-serif; text-anchor: middle; }
  .axis { font: 24px 'Liberation Sans', Arial, sans-serif; text-anchor: middle; }
  .y { fill: #19e02a; }
  .x { fill: #e01a1f; }
  .z { fill: #2a9fe8; }
  .overlay { position: absolute; left: 16px; top: 16px; width: 426px; height: 128px; background: rgba(127, 127, 127, 0.84); }
  .control { height: 64px; padding-left: 16px; display: flex; align-items: center; color: #8ac926; font: 35px/40px 'Liberation Sans', Arial, sans-serif; white-space: nowrap; }
  .control span { margin-right: 33px; padding-bottom: 6px; }
  .minus { width: 30px; height: 5px; background: #85cf1a; }
  .plus { margin-left: 34px; height: 30px; background: linear-gradient(#85cf1a, #85cf1a) center / 30px 5px no-repeat, linear-gradient(#9be02a, #6fb80e) center / 6px 30px no-repeat; }

  .console { flex: none; margin-top: 9px; }
  .console .dock-head { margin-right: 1px; padding-right: 11px; }
  .console .frame { height: 194px; flex: none; padding: 4px 4px 4px 3px; margin-right: 18px; }
  .log { overflow: hidden; }
  .log li { height: 36px; padding: 2px 7px; white-space: nowrap; }
  .log li:nth-child(even) { background: #f4f4f4; }
</style>
